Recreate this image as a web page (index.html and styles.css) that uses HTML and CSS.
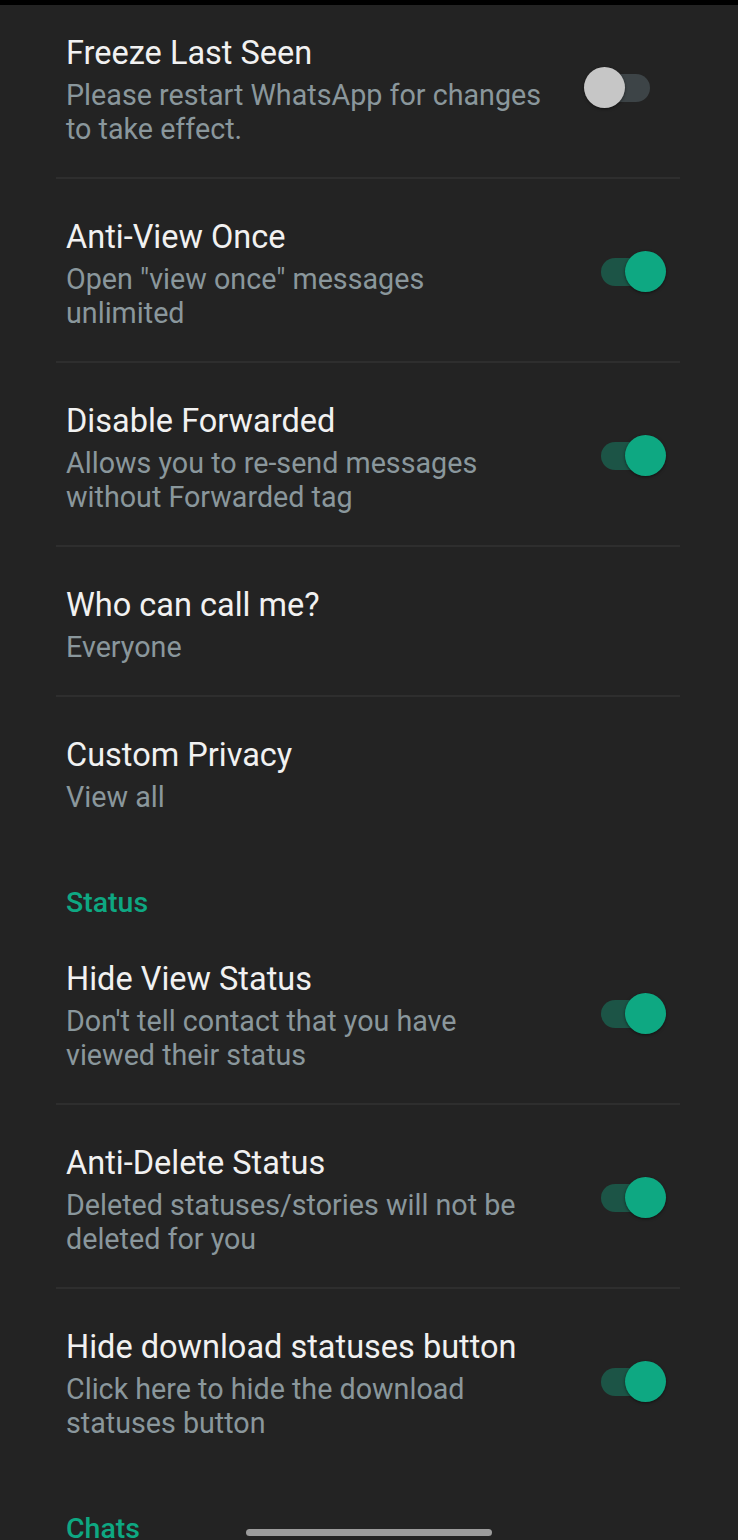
FILE: index.html
```html
<!DOCTYPE html>
<html lang="en">
<head>
    <meta charset="UTF-8">
    <meta name="viewport" content="width=device-width, initial-scale=1.0">
    <title>Privacy Settings</title>
    <link rel="stylesheet" href="styles.css">
</head>
<body>
    <div class="status-strip"></div>

    <div class="settings">
        <div class="pref-group">
            <div class="pref pref-first">
                <div class="pref-text">
                    <div class="pref-title">Freeze Last Seen</div>
                    <div class="pref-summary">Please restart WhatsApp for changes to take effect.</div>
                </div>
                <div class="switch switch-shifted"><span class="thumb"></span></div>
            </div>
            <div class="pref">
                <div class="pref-text">
                    <div class="pref-title">Anti-View Once</div>
                    <div class="pref-summary">Open "view once" messages unlimited</div>
                </div>
                <div class="switch on"><span class="thumb"></span></div>
            </div>
            <div class="pref">
                <div class="pref-text">
                    <div class="pref-title">Disable Forwarded</div>
                    <div class="pref-summary">Allows you to re-send messages without Forwarded tag</div>
                </div>
                <div class="switch on"><span class="thumb"></span></div>
            </div>
            <div class="pref">
                <div class="pref-text">
                    <div class="pref-title">Who can call me?</div>
                    <div class="pref-summary">Everyone</div>
                </div>
            </div>
            <div class="pref">
                <div class="pref-text">
                    <div class="pref-title">Custom Privacy</div>
                    <div class="pref-summary">View all</div>
                </div>
            </div>
        </div>

        <div class="category">Status</div>
        <div class="pref-group">
            <div class="pref">
                <div class="pref-text">
                    <div class="pref-title">Hide View Status</div>
                    <div class="pref-summary">Don't tell contact that you have viewed their status</div>
                </div>
                <div class="switch on"><span class="thumb"></span></div>
            </div>
            <div class="pref">
                <div class="pref-text">
                    <div class="pref-title">Anti-Delete Status</div>
                    <div class="pref-summary">Deleted statuses/stories will not be deleted for you</div>
                </div>
                <div class="switch on"><span class="thumb"></span></div>
            </div>
            <div class="pref">
                <div class="pref-text">
                    <div class="pref-title">Hide download statuses button</div>
                    <div class="pref-summary">Click here to hide the download statuses button</div>
                </div>
                <div class="switch on"><span class="thumb"></span></div>
            </div>
        </div>

        <div class="category">Chats</div>
    </div>

    <div class="home-bar"></div>
</body>
</html>
```

FILE: styles.css
```css
:root {
    --bg-color: #232323;
    --title-color: #f1f1f1;
    --summary-color: #8a979c;
    --accent-color: #0ea882;
    --divider-color: #2e2e2e;
}

* {
    margin: 0;
    padding: 0;
    box-sizing: border-box;
}

body {
    background: var(--bg-color);
    font-family: Roboto, 'Noto Sans', sans-serif;
    height: 1540px;
    overflow: hidden;
}

.status-strip {
    height: 5px;
    background: #000;
}

.settings {
    margin: 0 58px 0 56px;
}

/* Preference rows */
.pref {
    display: flex;
    align-items: center;
    padding: 35px 0 31px 10px;
    border-bottom: 2px solid var(--divider-color);
}

.pref-first {
    padding-top: 25px;
}

.pref-group .pref:last-child {
    border-bottom: none;
}

.pref-text {
    flex: 1;
    max-width: 478px;
}

.pref-title {
    font-size: 32.5px;
    line-height: 50px;
    color: var(--title-color);
    margin-top: -2px;
}

.pref-summary {
    font-size: 28.7px;
    line-height: 34px;
    color: var(--summary-color);
}

/* Switches */
.switch {
    position: relative;
    width: 60px;
    height: 28px;
    margin-left: auto;
    margin-right: 19px;
    border-radius: 14px;
    background: #3d4447;
}

.switch-shifted {
    margin-right: 30px;
}

.switch .thumb {
    position: absolute;
    top: -7px;
    left: -6px;
    width: 41px;
    height: 41px;
    border-radius: 50%;
    background: #c6c6c6;
    box-shadow: 0 1px 3px rgba(0, 0, 0, 0.5);
}

.switch.on {
    background: #1c5446;
}

.switch.on .thumb {
    left: auto;
    right: -5px;
    background: var(--accent-color);
}

/* Section headers */
.category {
    padding: 40px 0 0 10px;
    font-size: 28.5px;
    line-height: 36px;
    font-weight: 500;
    color: var(--accent-color);
}

.home-bar {
    position: fixed;
    left: 246px;
    top: 1529px;
    width: 246px;
    height: 7px;
    border-radius: 4px;
    background: #9c9c9c;
}
```
